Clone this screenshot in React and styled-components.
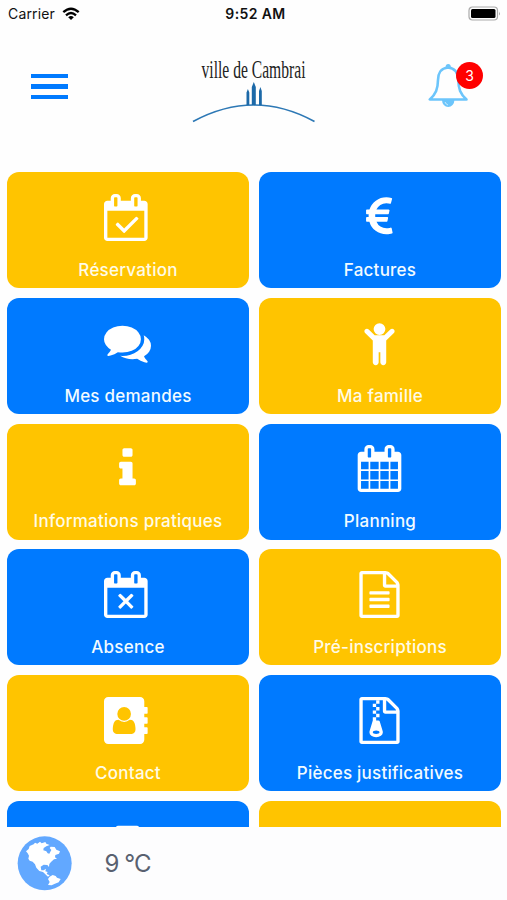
import React from "react";
import styled, { createGlobalStyle } from "styled-components";

const BLUE = "#007aff";
const YELLOW = "#ffc400";

const GlobalStyle = createGlobalStyle`
	* {
		box-sizing: border-box;
	}
	body {
		margin: 0;
		background: #fefefe;
		font-family: Inter, "Liberation Sans", sans-serif;
	}
`;

const Screen = styled.div`
	display: flex;
	flex-direction: column;
	width: 100%;
	height: 900px;
	overflow: hidden;
`;

const StatusBar = styled.div`
	display: grid;
	grid-template-columns: 1fr auto 1fr;
	align-items: center;
	height: 28px;
	padding: 0 6px 0 8px;
	color: #111;
	font-size: 14px;
	line-height: 28px;
`;

const Carrier = styled.div`
	display: flex;
	align-items: center;
	gap: 7px;
	letter-spacing: 0.15px;
`;

const Clock = styled.div`
	padding-left: 2px;
	font-weight: 600;
	letter-spacing: 0.4px;
`;

const Battery = styled.svg`
	justify-self: end;
`;

const Header = styled.header`
	display: grid;
	grid-template-columns: 161px 124px 1fr;
	align-items: start;
	height: 144px;
	padding: 28px 24px 0 31px;
`;

const MenuButton = styled.button`
	display: flex;
	flex-direction: column;
	gap: 6px;
	width: 37px;
	margin-top: 18px;
	padding: 0;
	border: 0;
	background: none;
`;

const MenuLine = styled.span`
	height: 4.3px;
	background: ${BLUE};
`;

const LogoSvg = styled.svg`
	overflow: visible;
`;

const Bell = styled.div`
	position: relative;
	justify-self: end;
	width: 55px;
	height: 54px;
	margin-top: 6px;
`;

const Badge = styled.span`
	position: absolute;
	top: 0;
	right: 0;
	width: 27px;
	height: 27px;
	border-radius: 50%;
	background: #ff0000;
	color: #fff;
	font-size: 14px;
	line-height: 27px;
	text-align: center;
`;

const Tiles = styled.main`
	display: grid;
	flex: 1;
	grid-template-columns: 1fr 1fr;
	grid-auto-rows: 116px;
	gap: 9.8px 10px;
	align-content: start;
	min-height: 0;
	padding: 0 6px 0 7px;
	overflow: hidden;
`;

const Tile = styled.div`
	display: flex;
	flex-direction: column;
	align-items: center;
	padding-top: 21.5px;
	border-radius: 12px;
	background: ${p => (p.$blue ? BLUE : YELLOW)};
	color: ${p => (p.$blue ? "#f2fbff" : "#fffbe6")};
`;

const TileIcon = styled.svg`
	flex: none;
	width: 47px;
	height: 47px;
	margin-right: 1.4px;
	fill: #fff;
	fill-rule: evenodd;
`;

const Label = styled.div`
	margin-top: 18.4px;
	font-size: 17px;
	font-weight: 550;
	line-height: 22px;
	letter-spacing: 0.24px;
	white-space: nowrap;
`;

const Footer = styled.footer`
	display: flex;
	flex: none;
	align-items: center;
	gap: 32.5px;
	height: 73.3px;
	padding-left: 17px;
	background: #fdfdfe;
	color: #596170;
	font-size: 24px;
	letter-spacing: -0.9px;
`;

const calendarFrame =
	"M128 1664h1408v-1024h-1408zM512 448v-288q0-14-9-23t-23-9h-64q-14 0-23 9t-9 23v288q0 14 9 23t23 9h64q14 0 23-9t9-23zM1280 448v-288q0-14-9-23t-23-9h-64q-14 0-23 9t-9 23v288q0 14 9 23t23 9h64q14 0 23-9t9-23zM1664 384v1280q0 52-38 90t-90 38h-1408q-52 0-90-38t-38-90v-1280q0-52 38-90t90-38h128v-96q0-66 47-113t113-47h64q66 0 113 47t47 113v96h384v-96q0-66 47-113t113-47h64q66 0 113 47t47 113v96h128q52 0 90 38t38 90z";

const fileFrame =
	"M1596 380q28 28 48 76t20 88v1152q0 40-28 68t-68 28h-1344q-40 0-68-28t-28-68v-1600q0-40 28-68t68-28h896q40 0 88 20t76 48zm-444-244v376h376q-10-29-22-41l-313-313q-12-12-41-22zm384 1528v-1024h-416q-40 0-68-28t-28-68v-416h-768v1536h1280z";

const icons = {
	check: [
		calendarFrame,
		"M1303 964l-512 512q-10 9-23 9t-23-9l-288-288q-9-10-9-23t9-22l46-46q9-9 22-9t23 9l220 220 444-444q10-9 23-9t22 9l46 46q9 9 9 22t-9 23z",
	],
	euro: [
		"M1360 1307l35 159q3 12-3 22.5t-17 14.5l-5 1q-4 2-10.5 3.5t-16 4.5-21.5 5.5-25.5 5-30 5-33.5 4.5-36.5 3-38.5 1q-234 0-409-130.5t-238-351.5h-95q-13 0-22.5-9.5t-9.5-22.5v-113q0-13 9.5-22.5t22.5-9.5h66q-2-57 1-105h-67q-14 0-23-9t-9-23v-114q0-14 9-23t23-9h98q67-210 243.5-338t400.5-128q102 0 194 23 11 3 20 15 6 11 3 24l-43 159q-3 13-14 19.5t-24 2.5l-4-1q-4-1-11.5-2.5l-17.5-3.5-22.5-3.5-26-3-29-2.5-29.5-1q-126 0-226 64t-150 176h468q16 0 25 12 10 12 7 26l-24 114q-5 26-32 26h-488q-3 37 0 105h459q15 0 25 12 9 12 6 27l-24 112q-2 11-11 18.5t-20 7.5h-387q48 117 149.5 185.5t228.5 68.5q18 0 36-1.5t33.5-3.5 29.5-4.5 24.5-5 18.5-4.5l12-3 5-2q13-5 26 2 12 7 15 21z",
	],
	comments: [
		"M1408 768q0 139-94 257t-256.5 186.5-353.5 68.5q-86 0-176-16-124 88-278 128-36 9-86 16h-3q-11 0-20.5-8t-11.5-21q-1-3-1-6.5t.5-6.5 2-6l2.5-5 3.5-5.5 4-5 4.5-5 4-4.5q5-6 23-25t26-29.5 22.5-29 25-38.5 20.5-44q-124-72-195-177t-71-224q0-139 94-257t256.5-186.5 353.5-68.5 353.5 68.5 256.5 186.5 94 257zm384 256q0 120-71 224.5t-195 176.5q10 24 20.5 44t25 38.5 22.5 29 26 29.5 23 25q1 1 4 4.5t4.5 5 4 5 3.5 5.5l2.5 5 2 6 .5 6.5-1 6.5q-3 14-13 22t-22 7q-50-7-86-16-154-40-278-128-90 16-176 16-271 0-472-132 58 4 88 4 161 0 309-45t264-129q125-92 192-212t67-254q0-77-23-152 129 71 204 178t75 230z",
	],
	child: [
		"M1444 532l-292 292v824q0 46-33 79t-79 33-79-33-33-79v-384h-64v384q0 46-33 79t-79 33-79-33-33-79v-824l-292-292q-28-28-28-68t28-68q29-28 68.500-28t67.500 28l228 228h368l228-228q28-28 68-28t68 28q28 29 28 68.500t-28 67.500z",
		"M1120 384a224 224 0 1 1-448 0a224 224 0 1 1 448 0z",
	],
	info: [
		"M1216 1344v128q0 26-19 45t-45 19h-512q-26 0-45-19t-19-45v-128q0-26 19-45t45-19h64v-384h-64q-26 0-45-19t-19-45v-128q0-26 19-45t45-19h384q26 0 45 19t19 45v576h64q26 0 45 19t19 45zm-128-1152v192q0 26-19 45t-45 19h-256q-26 0-45-19t-19-45v-192q0-26 19-45t45-19h256q26 0 45 19t19 45z",
	],
	calendar: [
		"M192 1664h288v-288h-288zM544 1664h320v-288h-320zM928 1664h320v-288h-320zM1312 1664h288v-288h-288zM192 1312h288v-320h-288zM544 1312h320v-320h-320zM928 1312h320v-320h-320zM1312 1312h288v-320h-288zM192 928h288v-288h-288zM544 928h320v-288h-320zM928 928h320v-288h-320zM1312 928h288v-288h-288zM576 448v-288q0-13-9.500-22.500t-22.500-9.500h-64q-13 0-22.500 9.500t-9.500 22.500v288q0 13 9.500 22.500t22.500 9.500h64q13 0 22.500-9.500t9.500-22.500zM1344 448v-288q0-13-9.500-22.500t-22.500-9.500h-64q-13 0-22.500 9.500t-9.500 22.500v288q0 13 9.500 22.500t22.500 9.500h64q13 0 22.500-9.500t9.500-22.500zM1728 384v1280q0 52-38 90t-90 38h-1408q-52 0-90-38t-38-90v-1280q0-52 38-90t90-38h128v-96q0-66 47-113t113-47h64q66 0 113 47t47 113v96h384v-96q0-66 47-113t113-47h64q66 0 113 47t47 113v96h128q52 0 90 38t38 90z",
	],
	times: [
		calendarFrame,
		"M1111 1385l-46 46q-9 9-22 9t-23-9l-188-189-188 189q-10 9-23 9t-22-9l-46-46q-9-9-9-22t9-23l189-188-189-188q-9-10-9-23t9-22l46-46q9-9 22-9t23 9l188 188 188-188q10-9 23-9t22 9l46 46q9 9 9 22t-9 23l-188 188 188 188q9 10 9 23t-9 22z",
	],
	file: [
		fileFrame,
		"M512 800q0-14 9-23t23-9h704q14 0 23 9t9 23v64q0 14-9 23t-23 9h-704q-14 0-23-9t-9-23zM1248 1024q14 0 23 9t9 23v64q0 14-9 23t-23 9h-704q-14 0-23-9t-9-23v-64q0-14 9-23t23-9zM1248 1280q14 0 23 9t9 23v64q0 14-9 23t-23 9h-704q-14 0-23-9t-9-23v-64q0-14 9-23t23-9z",
	],
	contact: [
		"M1028 644q0 107-76.500 183t-183.500 76-183.500-76-76.500-183q0-108 76.500-184t183.500-76 183.500 76 76.500 184zm-48 220q46 0 82.500 17t60 47.500 39.500 67 24 81 11.500 82.500 3.500 79q0 67-39.500 118.500t-105.500 51.500h-576q-66 0-105.500-51.500t-39.500-118.500q0-48 4.500-93.500t18.500-98.500 36.500-91.500 63-64.500 93.500-26h5q7 4 32 19.500t35.500 21 33 17 37 16 35 9 39.500 4.500 39.500-4.500 35-9 37-16 33-17 35.500-21 32-19.500zm684-256q0 13-9.500 22.500t-22.500 9.500h-96v128h96q13 0 22.500 9.500t9.500 22.500v192q0 13-9.500 22.500t-22.500 9.500h-96v128h96q13 0 22.500 9.500t9.500 22.500v192q0 13-9.500 22.500t-22.500 9.500h-96v224q0 66-47 113t-113 47h-1216q-66 0-113-47t-47-113v-1472q0-66 47-113t113-47h1216q66 0 113 47t47 113v224h96q13 0 22.500 9.500t9.500 22.500z",
	],
	archive: [
		fileFrame,
		"M640 256h128v128h-128zM768 128h128v128h-128zM768 384h128v128h-128zM640 512h128v128h-128zM768 640h128v128h-128z",
		"M909 943l107 349q8 27 8 52 0 83-72.500 137.500t-183.500 54.500-183.500-54.500-72.500-137.500q0-25 8-52 21-63 120-396v-128h128v128h79q22 0 39 13t23 34zm-141 465q53 0 90.500-19t37.500-45-37.500-45-90.500-19-90.500 19-37.500 45 37.500 45 90.500 19z",
	],
	phone: ["M544 144h704q96 0 96 96v1344q0 96-96 96h-704q-96 0-96-96v-1344q0-96 96-96z"],
};

const tiles = [
	{ icon: "check", label: "Réservation" },
	{ icon: "euro", label: "Factures", blue: true },
	{ icon: "comments", label: "Mes demandes", blue: true },
	{ icon: "child", label: "Ma famille" },
	{ icon: "info", label: "Informations pratiques" },
	{ icon: "calendar", label: "Planning", blue: true },
	{ icon: "times", label: "Absence", blue: true },
	{ icon: "file", label: "Pré-inscriptions" },
	{ icon: "contact", label: "Contact" },
	{ icon: "archive", label: "Pièces justificatives", blue: true },
	{ icon: "phone", blue: true },
	{},
];

const WifiIcon = () => (
	<svg width="18" height="14" viewBox="0 0 18 14" fill="none" stroke="#000" strokeWidth="2.3">
		<path d="M1.300 5.200Q9-1.800 16.700 5.200" />
		<path d="M4 8.300Q9 3.800 14 8.300" />
		<path d="M9 13L6.200 10.200Q9 7.900 11.800 10.200Z" fill="#000" stroke="none" />
	</svg>
);

const BatteryIcon = () => (
	<Battery width="33" height="16" viewBox="0 0 33 16">
		<rect x="1" y="1" width="28.500" height="13" rx="3.500" fill="#fff" stroke="#aaa" strokeWidth="1.200" />
		<rect x="3" y="3" width="24.500" height="9" rx="1.500" />
		<path d="M31 5.500q1.500 2 0 4z" fill="#999" />
	</Battery>
);

const Logo = () => (
	<LogoSvg width="124" height="70" viewBox="0 0 124 70">
		<text
			x="9.500"
			y="21.500"
			textLength="104"
			lengthAdjust="spacingAndGlyphs"
			fontFamily="Liberation Serif, serif"
			fontSize="25"
			fill="#222"
		>
			ville de Cambrai
		</text>
		<path d="M1 65.500Q62 32.500 122.500 65.500" fill="none" stroke="#2d78b5" strokeWidth="1.700" />
		<path
			d="M54.500 49V36.500L55.900 33L57.300 36.500V49ZM59.800 49V31L61.800 26L63.800 31V49ZM67 49V35L68.400 31L69.800 35V49Z"
			fill="#1c69a8"
		/>
	</LogoSvg>
);

const BellIcon = () => (
	<svg width="41" height="46" viewBox="0 0 41 46">
		<g fill="none" stroke="#6cc5fb" strokeWidth="2.600" strokeLinejoin="round">
			<path d="M20 5.500C12.500 6 10 12 10 18C9.800 27 8 32 1.800 37.500H38.500C32.200 32 30.500 27 30.300 18C30 12 27.500 6 20 5.500Z" />
		</g>
		<circle cx="20.200" cy="4.500" r="2.500" fill="#6cc5fb" />
		<path d="M14 38a6.200 7 0 0 0 12.400 0z" fill="#6cc5fb" />
		<path d="M17 40q1 2.500 3 3" fill="none" stroke="#c8ecff" />
	</svg>
);

const GlobeIcon = () => (
	<svg width="55" height="55" viewBox="0 0 165 165">
		<circle cx="83" cy="82" r="81" fill="#62a8ff" />
		<g fill="#fff" transform="translate(-51 -137)">
			<path d="M78 183L86 176L89 167L101 162L105 157L112 160L120 154L125 159L136 155L139 160L149 164L139 168L131 173L130 180L139 183L143 189L148 190L151 184L154 179L149 173L152 169L164 170L169 178L180 183L177 190L166 194L165 201L171 205L162 207L153 215L148 221L147 230L142 224L131 223L122 229L124 240L131 240L138 235L136 243L143 245L140 251L149 255L144 259L136 252L129 245L118 242L109 232L105 222L98 214L89 211L85 205L87 196L83 189Z" />
			<path d="M149 259L158 254L167 257L171 262L182 266L176 276L163 281L155 285L144 284L149 275L144 266Z" />
		</g>
	</svg>
);

const App = () => (
	<>
		<GlobalStyle />
		<Screen>
			<StatusBar>
				<Carrier>
					Carrier
					<WifiIcon />
				</Carrier>
				<Clock>9:52 AM</Clock>
				<BatteryIcon />
			</StatusBar>
			<Header>
				<MenuButton aria-label="Menu">
					<MenuLine />
					<MenuLine />
					<MenuLine />
				</MenuButton>
				<Logo />
				<Bell>
					<BellIcon />
					<Badge>3</Badge>
				</Bell>
			</Header>
			<Tiles>
				{tiles.map(({ icon, label, blue }, i) => (
					<Tile key={i} $blue={blue}>
						{icon && (
							<TileIcon viewBox="0 0 1792 1792">
								{icons[icon].map(d => (
									<path key={d} d={d} />
								))}
							</TileIcon>
						)}
						{label && <Label>{label}</Label>}
					</Tile>
				))}
			</Tiles>
			<Footer>
				<GlobeIcon />
				<span>9 °C</span>
			</Footer>
		</Screen>
	</>
);

export default App;
